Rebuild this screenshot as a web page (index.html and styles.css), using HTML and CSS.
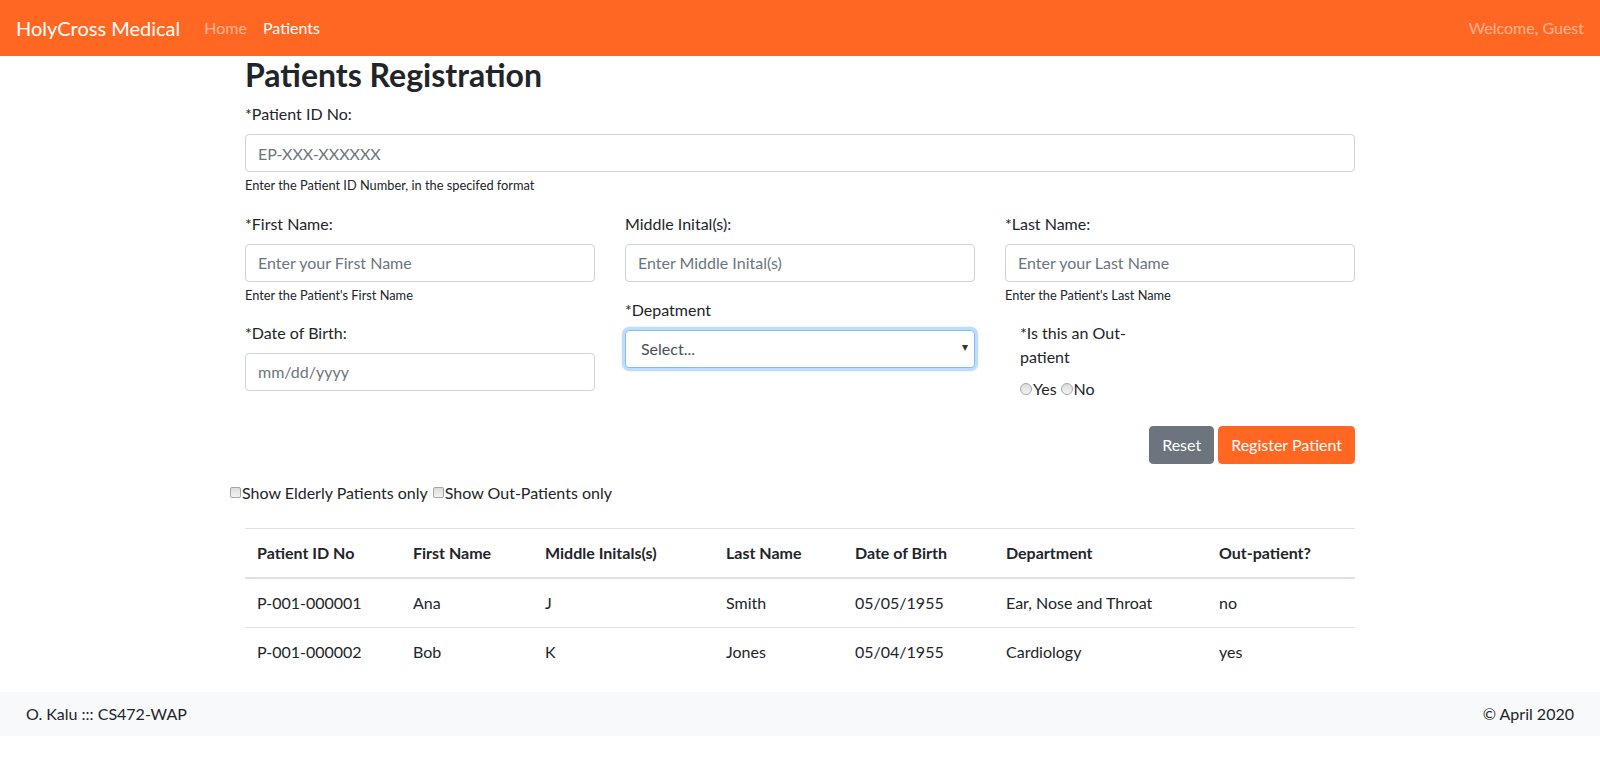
FILE: index.html
```html
<!DOCTYPE html>
<html lang="en">
<head>
<meta charset="utf-8">
<title>HolyCross Medical - Patients</title>
<link rel="stylesheet" href="styles.css">
</head>
<body>
<nav class="navbar">
  <a class="brand" href="#">HolyCross Medical</a>
  <ul class="nav">
    <li><a class="nav-link" href="#">Home</a></li>
    <li><a class="nav-link active" href="#">Patients</a></li>
  </ul>
  <span class="welcome">Welcome, Guest</span>
</nav>

<main class="container">
  <h2 class="title">Patients Registration</h2>
  <form class="reg-form">
    <div class="form-group">
      <label class="label" for="pid">*Patient ID No:</label>
      <input class="form-control" id="pid" type="text" placeholder="EP-XXX-XXXXXX">
      <small class="form-text">Enter the Patient ID Number, in the specifed format</small>
    </div>
    <div class="row">
      <div class="col">
        <div class="form-group">
          <label class="label" for="fname">*First Name:</label>
          <input class="form-control" id="fname" type="text" placeholder="Enter your First Name">
          <small class="form-text">Enter the Patient's First Name</small>
        </div>
        <div class="form-group">
          <label class="label" for="dob">*Date of Birth:</label>
          <input class="form-control" id="dob" type="text" placeholder="mm/dd/yyyy">
        </div>
      </div>
      <div class="col">
        <div class="form-group">
          <label class="label" for="mname">Middle Inital(s):</label>
          <input class="form-control" id="mname" type="text" placeholder="Enter Middle Inital(s)">
        </div>
        <div class="form-group">
          <label class="label" for="dept">*Depatment</label>
          <div class="select-wrap">
            <select class="form-control select focus" id="dept">
              <option>Select...</option>
              <option>Ear, Nose and Throat</option>
              <option>Cardiology</option>
            </select>
            <span class="caret">&#9662;</span>
          </div>
        </div>
      </div>
      <div class="col">
        <div class="form-group">
          <label class="label" for="lname">*Last Name:</label>
          <input class="form-control" id="lname" type="text" placeholder="Enter your Last Name">
          <small class="form-text">Enter the Patient's Last Name</small>
        </div>
        <div class="form-group outpatient">
          <label class="label op-label">*Is this an Out-patient</label>
          <div class="radios">
            <label class="radio"><input type="radio" name="op" value="yes">Yes</label>
            <label class="radio"><input type="radio" name="op" value="no">No</label>
          </div>
        </div>
      </div>
    </div>
    <div class="actions">
      <button type="reset" class="btn btn-secondary">Reset</button>
      <button type="submit" class="btn btn-primary">Register Patient</button>
    </div>
  </form>

  <div class="filters">
    <label class="check"><input type="checkbox">Show Elderly Patients only</label>
    <label class="check"><input type="checkbox">Show Out-Patients only</label>
  </div>

  <table class="table">
    <thead>
      <tr>
        <th class="c-id">Patient ID No</th>
        <th class="c-fn">First Name</th>
        <th class="c-mi">Middle Initals(s)</th>
        <th class="c-ln">Last Name</th>
        <th class="c-dob">Date of Birth</th>
        <th class="c-dep">Department</th>
        <th class="c-op">Out-patient?</th>
      </tr>
    </thead>
    <tbody>
      <tr>
        <td>P-001-000001</td><td>Ana</td><td>J</td><td>Smith</td><td>05/05/1955</td><td>Ear, Nose and Throat</td><td>no</td>
      </tr>
      <tr>
        <td>P-001-000002</td><td>Bob</td><td>K</td><td>Jones</td><td>05/04/1955</td><td>Cardiology</td><td>yes</td>
      </tr>
    </tbody>
  </table>
</main>

<footer class="footer">
  <span>O. Kalu ::: CS472-WAP</span>
  <span>&copy; April 2020</span>
</footer>
</body>
</html>
```
FILE: styles.css
```css
*{box-sizing:border-box;}
html,body{margin:0;padding:0;}
body{
  font-family:"Lato","Liberation Sans",sans-serif;
  font-size:16px;
  line-height:1.5;
  color:#212529;
  background:#fff;
}
a{text-decoration:none;}

/* navbar */
.navbar{
  display:flex;
  align-items:center;
  height:56px;
  padding:8px 16px;
  background:#ff6722;
}
.brand{
  font-size:20px;
  line-height:30px;
  padding:5px 0;
  margin-right:16px;
  color:#fff;
}
.nav{
  display:flex;
  list-style:none;
  margin:0;
  padding:0;
  flex:1;
}
.nav-link{
  display:block;
  padding:8px;
  color:rgba(255,255,255,.5);
}
.nav-link.active{color:#fff;}
.welcome{color:rgba(255,255,255,.5);}

/* container */
.container{
  width:1140px;
  margin:0 auto;
  padding:0 15px;
}
.title{
  margin:0 0 8px;
  font-size:32px;
  font-weight:700;
  line-height:1.2;
}
.form-group{margin-bottom:16px;}
.label{display:inline-block;margin-bottom:8px;}
.form-control{
  display:block;
  width:100%;
  height:38px;
  padding:6px 12px;
  font-family:inherit;
  font-size:16px;
  line-height:1.5;
  color:#495057;
  background:#fff;
  border:1px solid #ced4da;
  border-radius:4px;
}
.form-control::placeholder{color:#6c757d;opacity:1;}
.form-text{
  display:block;
  margin-top:4px;
  font-size:12.8px;
  line-height:1.5;
}
.row{
  display:flex;
  margin:0 -15px;
}
.col{
  flex:0 0 33.3333%;
  padding:0 15px;
}
.select-wrap{position:relative;}
.select{
  -webkit-appearance:none;
  appearance:none;
  padding-left:15px;
  color:#495057;
}
.select.focus{
  border-color:#80bdff;
  box-shadow:0 0 0 3.2px rgba(0,123,255,.25);
  outline:0;
}
.caret{
  position:absolute;
  right:7px;
  top:8px;
  font-size:12px;
  color:#333;
  pointer-events:none;
}
.outpatient{padding-left:15px;}
.op-label{width:118px;}
.radios{display:flex;align-items:center;}
.radio{display:inline-flex;align-items:center;margin-right:4px;}
.radio input,.check input{
  -webkit-appearance:none;
  appearance:none;
  margin:0 1px 0 0;
  width:12px;
  height:12px;
  border:1px solid #a6a6a6;
  background:linear-gradient(#dcdcdc,#f3f3f3);
}
.radio input{border-radius:50%;}
.check input{border-radius:2px;width:11px;height:11px;}
.actions{
  display:flex;
  justify-content:flex-end;
  gap:4px;
  margin-top:9px;
}
.btn{
  display:inline-block;
  height:38px;
  padding:6px 12px;
  font-family:inherit;
  font-size:16px;
  line-height:1.5;
  color:#fff;
  border:1px solid transparent;
  border-radius:4px;
}
.btn-secondary{background:#6c757d;border-color:#6c757d;}
.btn-primary{background:#ff6722;border-color:#ff6722;}

.filters{
  display:flex;
  align-items:center;
  gap:5px;
  margin:17px 0 0 -15px;
}
.check{display:inline-flex;align-items:center;}

.table{
  width:100%;
  margin:23px 0 16px;
  border-collapse:collapse;
  table-layout:fixed;
}
.table th,.table td{
  padding:12px;
  text-align:left;
  vertical-align:top;
  border-top:1px solid #dee2e6;
}
.table thead th{
  font-weight:700;
  border-bottom:2px solid #dee2e6;
}
.c-id{width:156px;}
.c-fn{width:132px;}
.c-mi{width:181px;}
.c-ln{width:129px;}
.c-dob{width:151px;}
.c-dep{width:213px;}
.c-op{width:148px;}

.footer{
  display:flex;
  justify-content:space-between;
  align-items:center;
  height:44px;
  padding:0 26px;
  background:#f8f9fa;
}
```
